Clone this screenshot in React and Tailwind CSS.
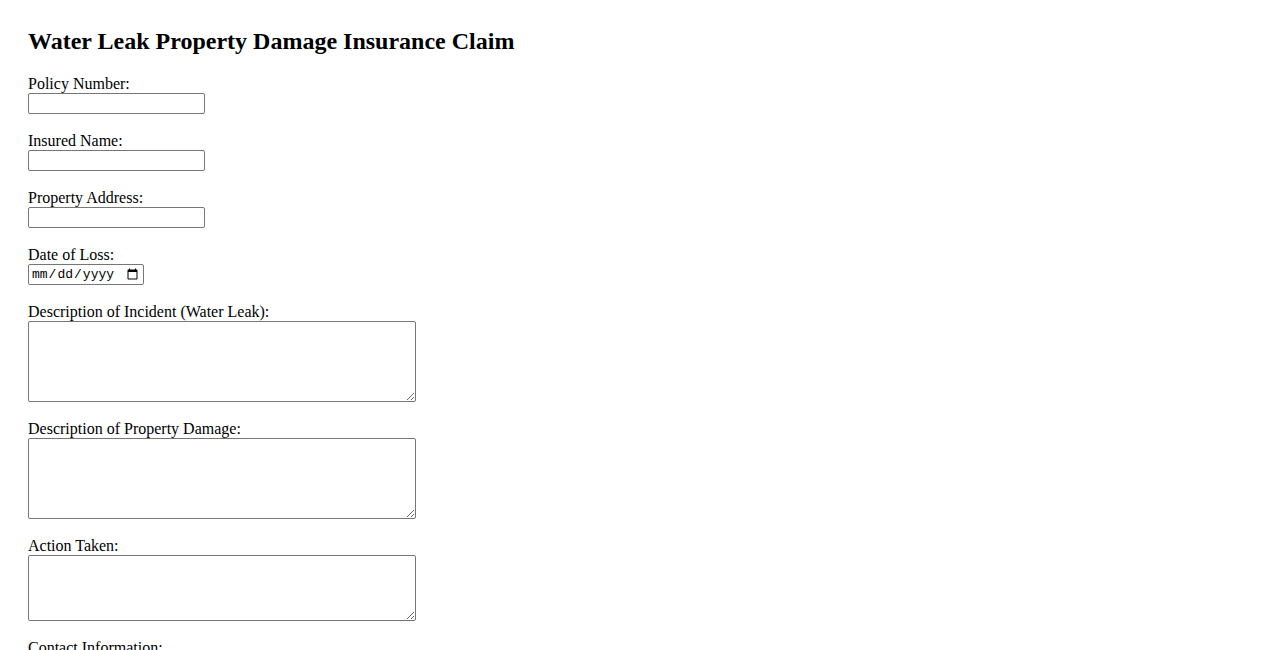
import { useState } from "react";

const textFields = [
  { id: "policyNumber", label: "Policy Number:" },
  { id: "insuredName", label: "Insured Name:" },
  { id: "propertyAddress", label: "Property Address:" },
];

const areaFields = [
  { id: "incident", label: "Description of Incident (Water Leak):", h: "h-[81px]" },
  { id: "damage", label: "Description of Property Damage:", h: "h-[81px]" },
  { id: "action", label: "Action Taken:", h: "h-[66px]" },
  { id: "contact", label: "Contact Information:", h: "h-[66px]" },
];

function App() {
  const [form, setForm] = useState({});
  const update = (id) => (e) => setForm({ ...form, [id]: e.target.value });

  return (
    <div className="min-h-screen bg-white px-[28px] pt-[27px] pb-10 text-black font-['Liberation_Serif','Times_New_Roman',serif]">
      <h2 className="text-[24px] font-bold leading-[28px] mb-[20px]">
        Water Leak Property Damage Insurance Claim
      </h2>
      <form onSubmit={(e) => e.preventDefault()}>
        {textFields.map((f) => (
          <div key={f.id} className="mb-[18px]">
            <label htmlFor={f.id} className="block text-[16px] leading-[18px]">{f.label}</label>
            <input
              id={f.id}
              type="text"
              value={form[f.id] || ""}
              onChange={update(f.id)}
              className="block w-[177px] h-[21px] border border-[#767676] rounded-[2px] px-[2px] text-[13px] font-['Liberation_Sans',Arial,sans-serif]"
            />
          </div>
        ))}
        <div className="mb-[18px]">
          <label htmlFor="dateOfLoss" className="block text-[16px] leading-[18px]">Date of Loss:</label>
          <input
            id="dateOfLoss"
            type="date"
            value={form.dateOfLoss || ""}
            onChange={update("dateOfLoss")}
            className="block w-[116px] h-[21px] border border-[#767676] rounded-[2px] px-[2px] text-[13px] font-['Liberation_Mono','Courier_New',monospace]"
          />
        </div>
        {areaFields.map((f) => (
          <div key={f.id} className="mb-[18px]">
            <label htmlFor={f.id} className="block text-[16px] leading-[18px]">{f.label}</label>
            <textarea
              id={f.id}
              value={form[f.id] || ""}
              onChange={update(f.id)}
              className={`block w-[388px] ${f.h} border border-[#767676] rounded-[2px] p-[2px] text-[13px] font-['Liberation_Mono','Courier_New',monospace]`}
            />
          </div>
        ))}
        <button
          type="submit"
          className="px-[6px] py-[1px] border border-[#767676] rounded-[2px] bg-[#efefef] text-[13px] font-['Liberation_Sans',Arial,sans-serif]"
        >
          Submit Claim
        </button>
      </form>
    </div>
  );
}

export default App;
